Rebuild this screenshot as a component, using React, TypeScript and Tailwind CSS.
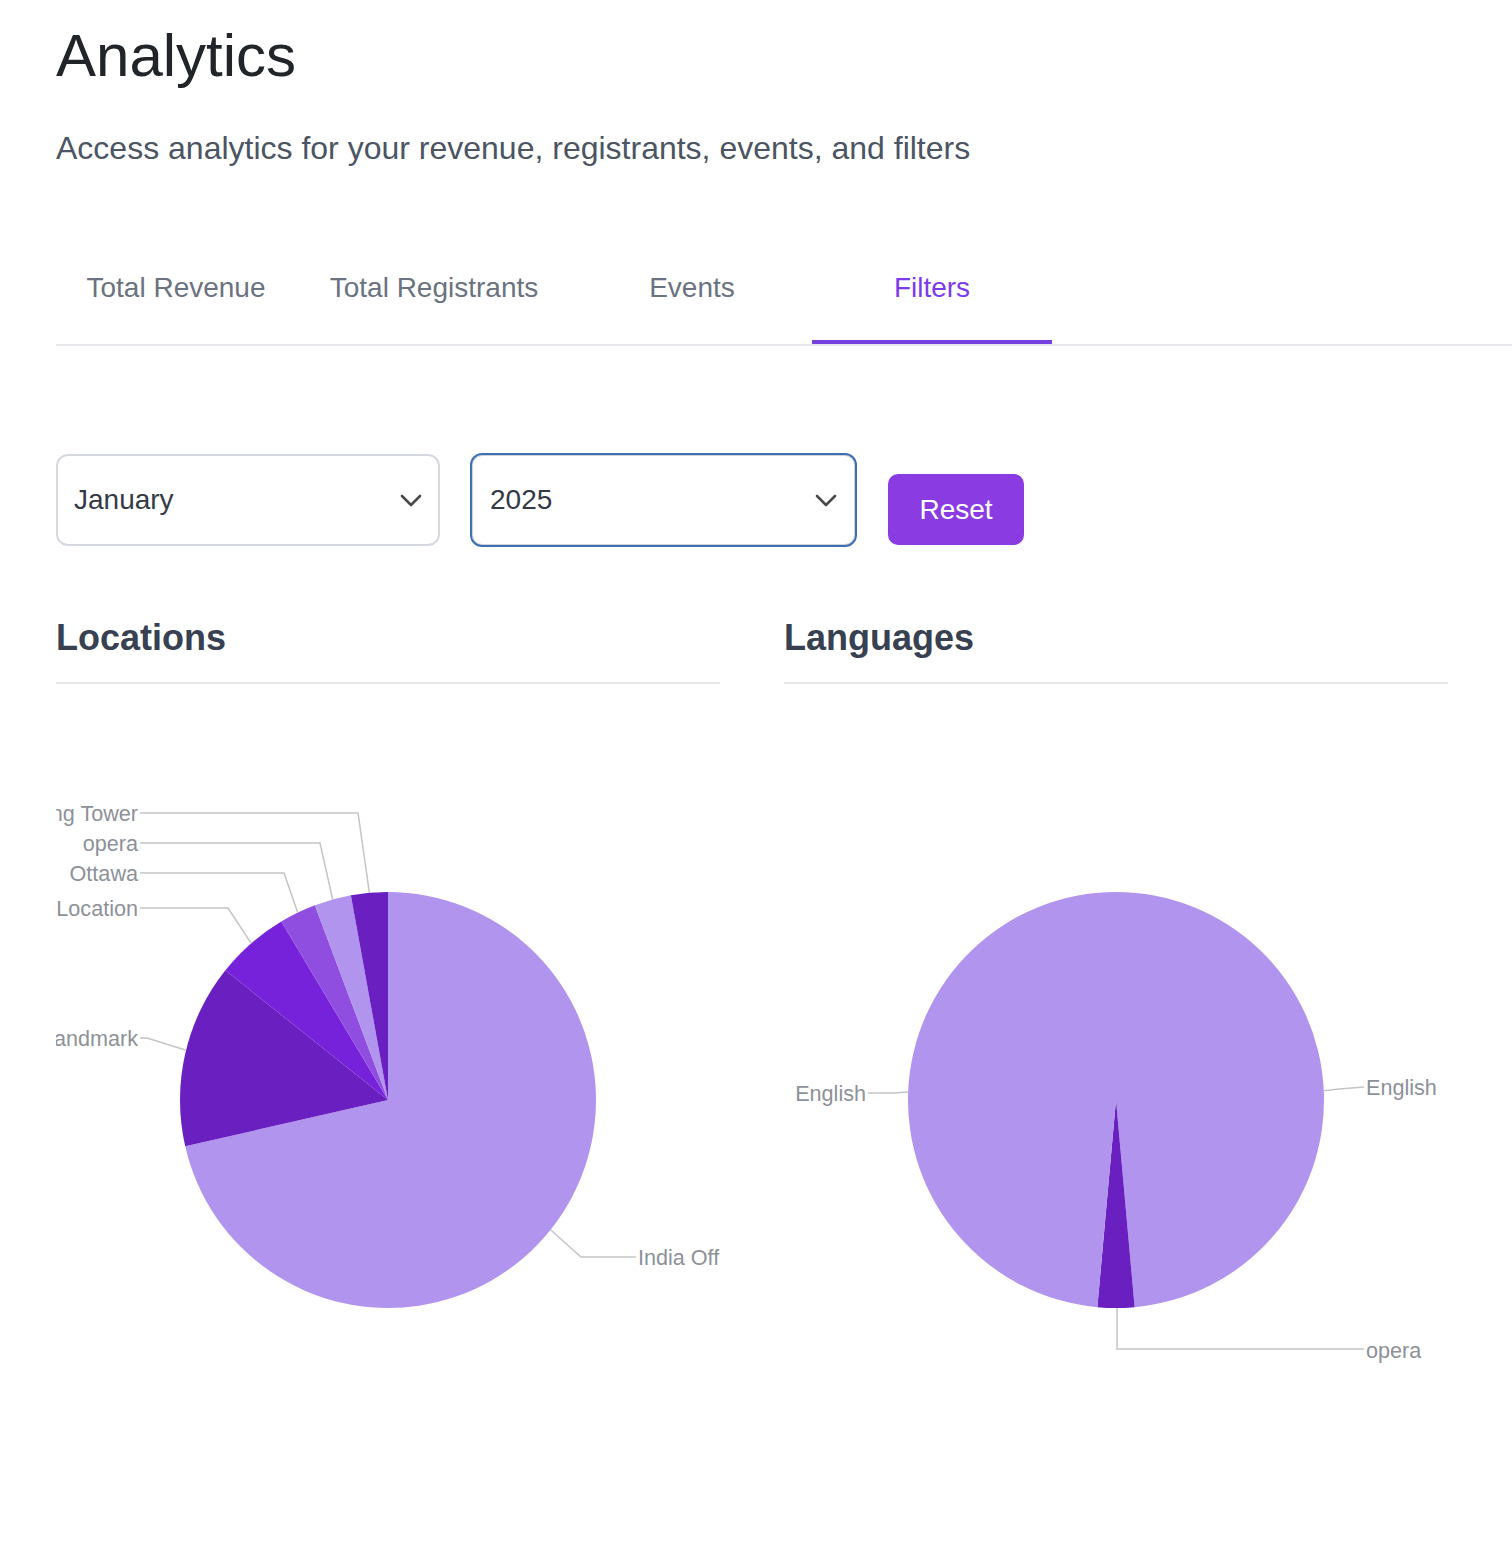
import React from "react";

type Slice = { name: string; value: number; color: string };

const LIGHT = "#b094ee";
const DARK = "#6a1fc0";

function pt(cx: number, cy: number, r: number, deg: number) {
  const a = (deg * Math.PI) / 180;
  return [cx + r * Math.sin(a), cy - r * Math.cos(a)];
}

function sectorPath(cx: number, cy: number, r: number, a1: number, a2: number) {
  const [x1, y1] = pt(cx, cy, r, a1);
  const [x2, y2] = pt(cx, cy, r, a2);
  const large = a2 - a1 > 180 ? 1 : 0;
  return `M ${cx} ${cy} L ${x1} ${y1} A ${r} ${r} 0 ${large} 1 ${x2} ${y2} Z`;
}

type Label = {
  text: string;
  points: string;
  x: number;
  y: number;
  anchor: "start" | "end";
};

function Pie({ slices, labels }: { slices: Slice[]; labels: Label[] }) {
  const cx = 332;
  const cy = 416;
  const r = 208;
  const total = slices.reduce((s, d) => s + d.value, 0);
  let acc = 0;
  return (
    <svg width={664} height={832} viewBox="0 0 664 832" className="block overflow-hidden">
      {slices.map((s, i) => {
        const a1 = (acc / total) * 360;
        acc += s.value;
        const a2 = (acc / total) * 360;
        return <path key={i} d={sectorPath(cx, cy, r, a1, a2)} fill={s.color} />;
      })}
      {labels.map((l, i) => (
        <g key={i}>
          <polyline points={l.points} fill="none" stroke="#c4c5c8" strokeWidth={1.5} />
          <text
            x={l.x}
            y={l.y}
            textAnchor={l.anchor}
            dominantBaseline="central"
            fill="#8d9199"
            style={{ fontFamily: '"Liberation Sans", Arial, sans-serif', fontSize: "21.6px" }}
          >
            {l.text}
          </text>
        </g>
      ))}
    </svg>
  );
}

function Chevron() {
  return (
    <svg width="22" height="13" viewBox="0 0 22 13" fill="none">
      <path d="M2 2 L11 11 L20 2" stroke="#4a4a4a" strokeWidth="2.6" strokeLinecap="round" strokeLinejoin="round" />
    </svg>
  );
}

export default function App() {
  const locSlices: Slice[] = [
    { name: "India Office", value: 25, color: LIGHT },
    { name: "Landmark", value: 5, color: DARK },
    { name: "Location", value: 2, color: "#7621da" },
    { name: "Ottawa", value: 1, color: "#904ee0" },
    { name: "opera", value: 1, color: LIGHT },
    { name: "Wing Tower", value: 1, color: DARK },
  ];
  const locLabels: Label[] = [
    { text: "Wing Tower", points: "313.4,208.8 302,129 84,129", x: 82, y: 129, anchor: "end" },
    { text: "opera", points: "276.7,215.5 264,159 84,159", x: 82, y: 159, anchor: "end" },
    { text: "Ottawa", points: "241.7,228.6 228,189 84,189", x: 82, y: 189, anchor: "end" },
    { text: "Location", points: "195.2,259.4 172,224 84,224", x: 82, y: 224, anchor: "end" },
    { text: "Landmark", points: "129.5,366 91,354 84,354", x: 82, y: 354, anchor: "end" },
    { text: "India Office", points: "494.6,545.7 525,573 580,573", x: 582, y: 573, anchor: "start" },
  ];
  const langSlices: Slice[] = [
    { name: "English", value: 17, color: LIGHT },
    { name: "opera", value: 1, color: DARK },
    { name: "English", value: 17, color: LIGHT },
  ];
  const langLabels: Label[] = [
    { text: "English", points: "539.8,406.7 555,405 580,403", x: 582, y: 403, anchor: "start" },
    { text: "opera", points: "333,624 333,665 580,665", x: 582, y: 666, anchor: "start" },
    { text: "English", points: "124.2,408 110,409 84,409", x: 82, y: 409, anchor: "end" },
  ];

  const tabs = [
    { label: "Total Revenue", w: "w-[240px]", active: false },
    { label: "Total Registrants", w: "w-[276px]", active: false },
    { label: "Events", w: "w-[240px]", active: false },
    { label: "Filters", w: "w-[240px]", active: true },
  ];

  return (
    <div className="min-h-[1558px] bg-white pl-[56px] font-['Liberation_Sans',Arial,sans-serif]">
      <h1 className="pt-[26px] text-[60px] leading-none font-normal text-[#212529]">Analytics</h1>
      <p className="mt-[46px] text-[32px] leading-none text-[#4b5563]">
        Access analytics for your revenue, registrants, events, and filters
      </p>

      <div className="mt-[68px] flex border-b-2 border-[#e5e7eb]">
        {tabs.map((t) => (
          <div
            key={t.label}
            className={`${t.w} flex h-[112px] items-center justify-center border-b-4 pt-1 text-[28px] leading-none ${
              t.active ? "border-[#7440e0] text-[#7c3aed]" : "border-transparent text-[#6b7280]"
            }`}
          >
            {t.label}
          </div>
        ))}
      </div>

      <div className="mt-[107px] flex items-start">
        <div className="mt-[1px] flex h-[92px] w-[384px] items-center justify-between rounded-[12px] border-2 border-[#d5d8dd] pr-[16px] pl-[16px]">
          <span className="text-[28px] leading-none text-[#343a46]">January</span>
          <Chevron />
        </div>
        <div className="ml-[30px] flex h-[94px] w-[387px] items-center justify-between rounded-[12px] border-2 border-[#3d70b0] pr-[18px] pl-[18px] shadow-[inset_0_0_0_1px_#cfd3d8]">
          <span className="text-[28px] leading-none text-[#343a46]">2025</span>
          <Chevron />
        </div>
        <button className="mt-[21px] ml-[31px] flex h-[71px] w-[136px] items-center justify-center rounded-[10px] bg-[#8a3be2] text-[28px] leading-none text-white">
          Reset
        </button>
      </div>

      <div className="mt-[73px] grid w-[1392px] grid-cols-2 gap-[64px]">
        <div>
          <h2 className="border-b-2 border-[#e5e7eb] pb-[26px] text-[36px] leading-none font-bold text-[#374151]">
            Locations
          </h2>
          <Pie slices={locSlices} labels={locLabels} />
        </div>
        <div>
          <h2 className="border-b-2 border-[#e5e7eb] pb-[26px] text-[36px] leading-none font-bold text-[#374151]">
            Languages
          </h2>
          <Pie slices={langSlices} labels={langLabels} />
        </div>
      </div>
    </div>
  );
}
